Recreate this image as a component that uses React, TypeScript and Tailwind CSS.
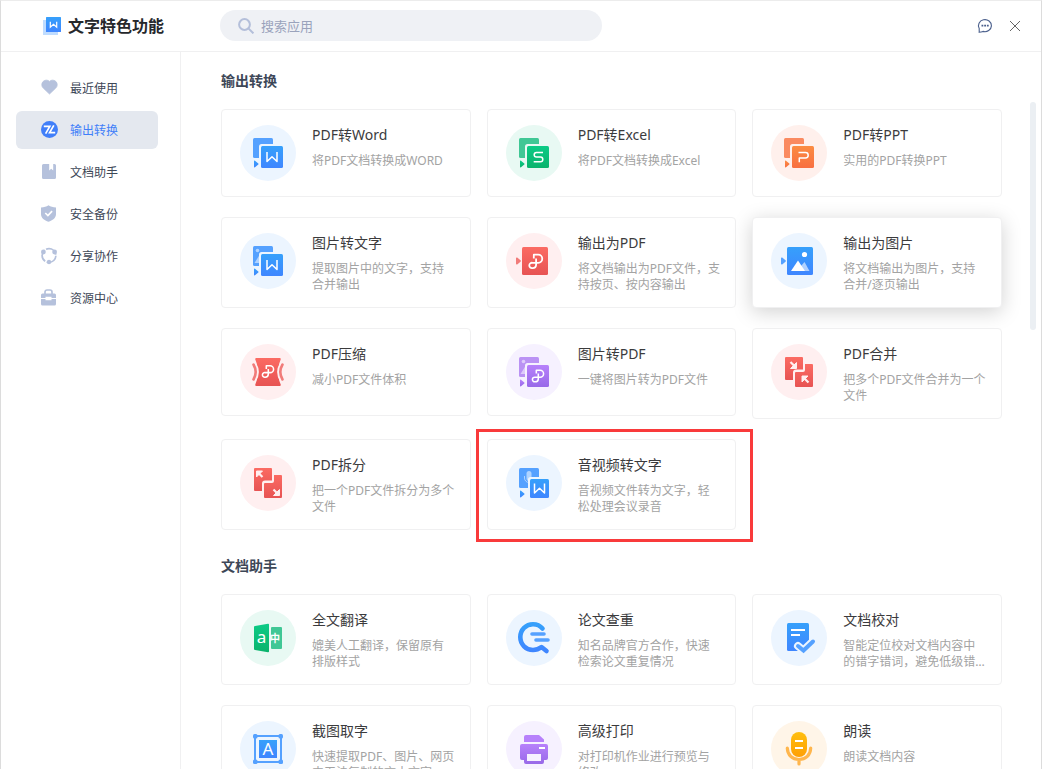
import { useState } from "react";
import type { ReactNode } from "react";
import clsx from "clsx";

type Tone = "blue" | "green" | "orange" | "red" | "purple" | "yellow";

interface Tool {
  title: string;
  desc: string;
  tone: Tone;
  icon: ReactNode;
  raised?: boolean;
  marked?: boolean;
}

const TONE_BG: Record<Tone, string> = {
  blue: "bg-[#ecf5ff]",
  green: "bg-[#e8f9f3]",
  orange: "bg-[#fff0ec]",
  red: "bg-[#ffeff0]",
  purple: "bg-[#f6f1ff]",
  yellow: "bg-[#fff5e8]",
};

const BG: Record<Tone, string> = {
  blue: "#ecf5ff",
  green: "#e8f9f3",
  orange: "#fff0ec",
  red: "#ffeff0",
  purple: "#f6f1ff",
  yellow: "#fff5e8",
};

const SOFT: Record<Tone, string> = {
  blue: "#55a1ff",
  green: "#40c795",
  orange: "#fa8a60",
  red: "#f17b79",
  purple: "#ba92f4",
  yellow: "#ffb64d",
};

const GRADIENTS: [Tone, string, string][] = [
  ["blue", "#36a0fb", "#3f86ff"],
  ["green", "#0ccb86", "#0ab36c"],
  ["orange", "#fb8c42", "#f86f41"],
  ["red", "#fb6b63", "#e75353"],
  ["purple", "#b781fb", "#9869e8"],
  ["yellow", "#ffbf0f", "#ff9f04"],
];

function Gradients() {
  return (
    <svg className="size-0" aria-hidden="true">
      <defs>
        {GRADIENTS.map(([tone, from, to]) => (
          <linearGradient key={tone} id={`g-${tone}`} x1="0" y1="0" x2="0" y2="1">
            <stop stopColor={from} />
            <stop offset="1" stopColor={to} />
          </linearGradient>
        ))}
      </defs>
    </svg>
  );
}

const MARK_W = <path d="M27 27v9.5l5-4.7 5 4.7V27" />;
const MARK_S = <path d="M37 27.5h-6.500a2.300 2.300 0 0 0 0 4.600h4a2.300 2.300 0 0 1 0 4.600h-6.800" />;
const MARK_P = <path d="M27.5 27.5h7a2.7 2.7 0 0 1 0 5.4h-6.2v4.4" />;
const MARK_PDF = <path d="M27.8 25.5v-3.8h4.4a4 4 0 0 1 0 8.1h-5.700a2.700 2.700 0 1 0 0 5.300c2.200 0 3.600-1 3.600-3.300v-6.200" />;

interface ConvertProps {
  tone: Tone;
  mark: ReactNode;
  back?: "plain" | "image" | "mic";
}

function ConvertIcon({ tone, mark, back = "plain" }: ConvertProps) {
  const at = back === "mic" ? 24 : 21;
  return (
    <g>
      <rect x="13" y="13" width="20" height="20" rx="1.5" fill={SOFT[tone]} />
      {back === "image" && (
        <g fill={BG[tone]} opacity="0.6">
          <circle cx="17.5" cy="17.5" r="1.8" />
          <path d="M14.5 30l5-8 4 8z" />
        </g>
      )}
      {back === "mic" && (
        <g opacity="0.6">
          <rect x="20.5" y="16" width="5" height="10" rx="2.5" fill={BG[tone]} />
          <path d="M18.5 21v2a4.5 4.5 0 0 0 5 4.5" fill="none" stroke={BG[tone]} />
        </g>
      )}
      <rect x={at - 2} y={at - 2} width="26" height="26" rx="2.5" fill={BG[tone]} />
      <rect x={at} y={at} width={43 - at} height={43 - at} rx="1.5" fill={`url(#g-${tone})`} />
      <path d="M14 36.2c0-.6.5-.8 1-.5l3.3 2.7c.4.3.4.8 0 1.2L15 42.2c-.5.4-1 .1-1-.5z" fill={`url(#g-${tone})`} />
      <g
        fill="none"
        stroke="#fff"
        strokeWidth="1.5"
        strokeLinejoin="round"
        transform={back === "mic" ? "translate(1.5 1.5)" : undefined}
      >
        {mark}
      </g>
    </g>
  );
}

function ExportIcon({ tone, children }: { tone: Tone; children: ReactNode }) {
  return (
    <g>
      <path d="M10 25.2c0-.7.6-1 1.2-.6l3.3 2.7c.5.4.5 1 0 1.4l-3.3 2.7c-.6.4-1.2.1-1.2-.6z" fill={SOFT[tone]} />
      <rect x="16" y="14" width="26" height="28" rx="1.5" fill={`url(#g-${tone})`} />
      {children}
    </g>
  );
}

function PagesIcon({ children }: { children: ReactNode }) {
  return (
    <g>
      <path
        d="M15 13h16a1 1 0 0 1 1 1v11.5h-7a3 3 0 0 0-3 3V36h-7a1 1 0 0 1-1-1V14a1 1 0 0 1 1-1z"
        fill="url(#g-red)"
      />
      <path
        d="M34 20h7a1 1 0 0 1 1 1v21a1 1 0 0 1-1 1H25a1 1 0 0 1-1-1V29a1 1 0 0 1 1-1h7a2 2 0 0 0 2-2z"
        fill="url(#g-red)"
      />
      <g fill={BG.red} stroke={BG.red} strokeWidth="2.2">
        {children}
      </g>
    </g>
  );
}

const CONVERT_TOOLS: Tool[] = [
  { title: "PDF转Word", desc: "将PDF文档转换成WORD", tone: "blue", icon: <ConvertIcon tone="blue" mark={MARK_W} /> },
  { title: "PDF转Excel", desc: "将PDF文档转换成Excel", tone: "green", icon: <ConvertIcon tone="green" mark={MARK_S} /> },
  { title: "PDF转PPT", desc: "实用的PDF转换PPT", tone: "orange", icon: <ConvertIcon tone="orange" mark={MARK_P} /> },
  {
    title: "图片转文字",
    desc: "提取图片中的文字，支持合并输出",
    tone: "blue",
    icon: <ConvertIcon tone="blue" mark={MARK_W} back="image" />,
  },
  {
    title: "输出为PDF",
    desc: "将文档输出为PDF文件，支持按页、按内容输出",
    tone: "red",
    icon: (
      <ExportIcon tone="red">
        <g fill="none" stroke="#fff" strokeWidth="1.8" strokeLinejoin="round">
          {MARK_PDF}
        </g>
      </ExportIcon>
    ),
  },
  {
    title: "输出为图片",
    desc: "将文档输出为图片，支持合并/逐页输出",
    tone: "blue",
    raised: true,
    icon: (
      <ExportIcon tone="blue">
        <g fill="#fff">
          <circle cx="33.5" cy="21.5" r="2.6" />
          <path d="M30 33l3.500-4 5 9H30z" opacity="0.6" />
          <path d="M20 38l7-10.500L34 38z" />
        </g>
      </ExportIcon>
    ),
  },
  {
    title: "PDF压缩",
    desc: "减小PDF文件体积",
    tone: "red",
    icon: (
      <g>
        <path
          d="M16.5 14h23c1 0 1.5.6 1.2 1.5-3.3 8-3.3 17 0 25 .3.9-.2 1.5-1.2 1.5h-23c-1 0-1.5-.6-1.2-1.5 3.3-8 3.3-17 0-25-.3-.9.2-1.5 1.2-1.5z"
          fill="url(#g-red)"
        />
        <path
          d="M13.5 20.5c3 4.8 3 10.2 0 15M42.5 20.5c-3 4.8-3 10.2 0 15"
          fill="none"
          stroke={BG.red}
          strokeWidth="6"
        />
        <path
          d="M13.5 20.5c2.8 4.8 2.8 10.2 0 15M42.5 20.5c-2.8 4.8-2.8 10.2 0 15"
          fill="none"
          stroke={SOFT.red}
          strokeWidth="2.6"
          strokeLinecap="round"
        />
        <g fill="none" stroke="#fff" strokeWidth="1.8" strokeLinejoin="round" transform="translate(2.4 3) scale(.86)">
          {MARK_PDF}
        </g>
      </g>
    ),
  },
  {
    title: "图片转PDF",
    desc: "一键将图片转为PDF文件",
    tone: "purple",
    icon: (
      <ConvertIcon
        tone="purple"
        back="image"
        mark={
          <g strokeWidth="1.8" transform="translate(6.4 7.6) scale(.86)">
            {MARK_PDF}
          </g>
        }
      />
    ),
  },
  {
    title: "PDF合并",
    desc: "把多个PDF文件合并为一个文件",
    tone: "red",
    icon: (
      <PagesIcon>
        <path d="M19.500 18l4.500 4.500" />
        <path d="M25.500 18.500v6H19.500z" strokeWidth="1" />
        <path d="M37.500 38.500L33 34" />
        <path d="M31 38v-6h6z" strokeWidth="1" />
      </PagesIcon>
    ),
  },
  {
    title: "PDF拆分",
    desc: "把一个PDF文件拆分为多个文件",
    tone: "red",
    icon: (
      <PagesIcon>
        <path d="M22.500 22L18 17.500" />
        <path d="M16.500 22v-6h6z" strokeWidth="1" />
        <path d="M33.500 34.500l4.500 4.500" />
        <path d="M39.500 34.500v6h-6z" strokeWidth="1" />
      </PagesIcon>
    ),
  },
  {
    title: "音视频转文字",
    desc: "音视频文件转为文字，轻松处理会议录音",
    tone: "blue",
    marked: true,
    icon: <ConvertIcon tone="blue" mark={MARK_W} back="mic" />,
  },
];

const DOC_TOOLS: Tool[] = [
  {
    title: "全文翻译",
    desc: "媲美人工翻译，保留原有排版样式",
    tone: "green",
    icon: (
      <g>
        <rect x="31" y="17" width="11" height="22" rx="1" fill={SOFT.green} />
        <path d="M15 16l13-2.3c.6-.1 1 .2 1 .8v27c0 .6-.4.9-1 .8L15 40c-.6-.1-1-.5-1-1V17c0-.5.4-.9 1-1z" fill="url(#g-green)" />
        <text x="21.5" y="33" textAnchor="middle" fontSize="17" fill="#fff">a</text>
        <text x="35" y="31.5" textAnchor="middle" fontSize="10" fontWeight="700" fill="#fff">中</text>
      </g>
    ),
  },
  {
    title: "论文查重",
    desc: "知名品牌官方合作，快速检索论文重复情况",
    tone: "blue",
    icon: (
      <g fill="none" strokeLinecap="round" strokeLinejoin="round">
        <path
          d="M36.5 18.5C34 15.5 30.5 14.2 27 14.2c-7 0-12.7 5.6-12.7 12.9S20 40 27 40c3.500 0 6-1 8.500-3l5 4"
          stroke="url(#g-blue)"
          strokeWidth="4.6"
        />
        <path d="M26 24h12M30 30h12" stroke={SOFT.blue} strokeWidth="3.6" />
      </g>
    ),
  },
  {
    title: "文档校对",
    desc: "智能定位校对文档内容中的错字错词，避免低级错误出现",
    tone: "blue",
    icon: (
      <g fill="none">
        <rect x="16" y="13" width="22" height="28" rx="1.5" fill="url(#g-blue)" />
        <path d="M20 20h14M20 25h9" stroke="#fff" strokeWidth="2" />
        <path d="M27 36l5.5 4.500L42 31.500" stroke={BG.blue} strokeWidth="8" strokeLinecap="round" />
        <path d="M27 36l5.5 4.500L42 31.500" stroke={SOFT.blue} strokeWidth="4" strokeLinecap="round" />
      </g>
    ),
  },
  {
    title: "截图取字",
    desc: "快速提取PDF、图片、网页中无法复制的文本文字",
    tone: "blue",
    icon: (
      <g>
        <rect x="15" y="15" width="26" height="26" fill="none" stroke={SOFT.blue} strokeWidth="2" />
        <g fill={SOFT.blue}>
          <rect x="13" y="13" width="4.5" height="4.5" rx="1.5" />
          <rect x="38.5" y="13" width="4.5" height="4.5" rx="1.5" />
          <rect x="13" y="38.5" width="4.5" height="4.5" rx="1.5" />
          <rect x="38.5" y="38.5" width="4.5" height="4.5" rx="1.5" />
        </g>
        <rect x="19" y="19" width="18" height="18" fill="url(#g-blue)" />
        <text x="28" y="34" textAnchor="middle" fontSize="17" fill="#fff">A</text>
      </g>
    ),
  },
  {
    title: "高级打印",
    desc: "对打印机作业进行预览与修改",
    tone: "purple",
    icon: (
      <g>
        <path d="M20 14h13l5 4.500V21H18v-5a2 2 0 0 1 2-2z" fill="#b781fb" />
        <path
          d="M16 23h24a2 2 0 0 1 2 2v12a2 2 0 0 1-2 2h-2v2a2 2 0 0 1-2 2H20a2 2 0 0 1-2-2v-2h-2a2 2 0 0 1-2-2V25a2 2 0 0 1 2-2z"
          fill="url(#g-purple)"
        />
        <rect x="33" y="26" width="6" height="2" fill="#fff" />
        <rect x="21" y="33" width="14" height="7" fill={BG.purple} />
      </g>
    ),
  },
  {
    title: "朗读",
    desc: "朗读文档内容",
    tone: "yellow",
    icon: (
      <g fill="none">
        <path
          d="M16.3 27c.2 7 5 11.5 11.7 11.5S39.500 34 39.700 27M28 39v4"
          stroke={SOFT.yellow}
          strokeWidth="3.2"
          strokeLinecap="round"
        />
        <rect x="20" y="11" width="16" height="25" rx="8" fill="url(#g-yellow)" />
        <path d="M24 20h8M24 27h8" stroke="#fff" strokeWidth="2" />
      </g>
    ),
  },
];

const NAV: { label: string; icon: ReactNode }[] = [
  {
    label: "最近使用",
    icon: (
      <path
        d="M8.5 15L2.200 9A4.200 4.200 0 0 1 8.500 2.400 4.200 4.200 0 0 1 14.800 9z"
        stroke="currentColor"
        strokeWidth="0.8"
      />
    ),
  },
  {
    label: "输出转换",
    icon: (
      <>
        <circle cx="8.5" cy="8.5" r="8.5" />
        <path d="M2.800 5.300h6L4.600 12.600M14.200 11.600H8.600l4.200-7.300" fill="none" stroke="#fff" strokeWidth="1.7" />
      </>
    ),
  },
  {
    label: "文档助手",
    icon: (
      <path d="M2.500 1h5.700v6.500l2-1.800 2 1.800V1h1.300A1.500 1.500 0 0 1 15 2.500v12a1.500 1.500 0 0 1-1.500 1.500h-11A1.500 1.500 0 0 1 1 14.500v-12A1.500 1.500 0 0 1 2.500 1z" />
    ),
  },
  {
    label: "安全备份",
    icon: (
      <>
        <path d="M7.500.3c2 1.400 4.500 2 7.500 2.200v6.700c0 3.600-3.500 6.300-7.500 7.500C3.500 15.500 0 12.800 0 9.200V2.500C3 2.300 5.500 1.700 7.500.3z" />
        <path d="M4.300 8l2.600 2.500 4.200-4.300" fill="none" stroke="#fff" strokeWidth="1.7" />
      </>
    ),
  },
  {
    label: "分享协作",
    icon: (
      <>
        <circle
          cx="8"
          cy="8.5"
          r="6.9"
          fill="none"
          stroke="currentColor"
          strokeWidth="1.7"
          strokeDasharray="12.85 1.6"
          strokeDashoffset="-0.35"
        />
        <circle cx="2.4" cy="5" r="2.4" />
        <circle cx="13.6" cy="5" r="2.4" />
        <circle cx="8" cy="15" r="2.2" />
      </>
    ),
  },
  {
    label: "资源中心",
    icon: (
      <>
        <path d="M4 5V3a2 2 0 0 1 2-2h3a2 2 0 0 1 2 2v2" fill="none" stroke="currentColor" strokeWidth="1.7" />
        <path d="M1.500 4.500h12A1.500 1.500 0 0 1 15 6v3h-4.500V7.800h-6V9H0V6a1.500 1.500 0 0 1 1.500-1.500z" />
        <path d="M0 10h4.500v1.300h6V10H15v5a1.500 1.500 0 0 1-1.500 1.500h-12A1.500 1.500 0 0 1 0 15z" />
      </>
    ),
  },
];

function ToolCard({ tool }: { tool: Tool }) {
  return (
    <li className="relative">
      <button
        type="button"
        className={clsx(
          "flex min-h-[88px] w-full items-start gap-4 rounded border border-[#f0f0f1] bg-white pt-[15px] pr-[15px] pb-[14px] pl-[18px] text-left",
          tool.raised && "shadow-[0_4px_20px_rgba(0,0,0,0.18)]"
        )}
      >
        <span className={clsx("size-14 shrink-0 rounded-full", TONE_BG[tool.tone])}>
          <svg viewBox="0 0 56 56" className="size-14" aria-hidden="true">
            {tool.icon}
          </svg>
        </span>
        <span className="min-w-0 flex-1">
          <span className="mb-[9px] block text-sm leading-[19px] text-[#3b3b3d]">{tool.title}</span>
          <span className="line-clamp-2 text-xs leading-4 text-[#a3a3a3]">{tool.desc}</span>
        </span>
      </button>
      {tool.marked && (
        <span className="pointer-events-none absolute -top-[10px] -right-[17px] -bottom-3 -left-[11px] border-3 border-[#f93a3b]" />
      )}
    </li>
  );
}

function ToolSection({ title, tools }: { title: string; tools: Tool[] }) {
  return (
    <section>
      <h2 className="mb-[18px] text-sm leading-5 font-bold text-[#3d4757]">{title}</h2>
      <ul className="grid grid-cols-3 items-start gap-x-4 gap-y-5">
        {tools.map((tool) => (
          <ToolCard key={tool.title} tool={tool} />
        ))}
      </ul>
    </section>
  );
}

export default function App() {
  const [active, setActive] = useState("输出转换");
  const [query, setQuery] = useState("");

  return (
    <div className="flex h-screen flex-col overflow-hidden border-x border-t border-x-[#dcdcdc] border-t-[#ececec] bg-white font-['Noto_Sans','Noto_Sans_CJK_SC',sans-serif]">
      <header className="flex h-[51px] shrink-0 items-center border-b border-[#f0f0f1] pr-5 pb-px">
        <div className="flex w-[219px] shrink-0 items-center gap-[7px] pl-[42px]">
          <svg viewBox="0 0 18 18" className="size-[18px]" aria-hidden="true">
            <rect y="3" width="15" height="15" fill="#bfdcff" />
            <rect x="3" width="15" height="15" rx="0.5" fill="url(#g-blue)" />
            <path d="M7.300 4.800v5.400l3.200-3 3.200 3V4.800" fill="none" stroke="#fff" strokeWidth="1.2" />
          </svg>
          <h1 className="text-base leading-6 font-bold text-[#26282c]">文字特色功能</h1>
        </div>
        <label className="flex h-[31px] w-[382px] items-center gap-[7px] rounded-full bg-[#eff1f5] px-[18px]">
          <svg viewBox="0 0 16 16" className="size-4 shrink-0" fill="none" stroke="#b4bfda" strokeWidth="2" aria-hidden="true">
            <circle cx="6.5" cy="6.5" r="5.4" />
            <path d="M10.400 10.400l5 5" />
          </svg>
          <input
            type="text"
            aria-label="搜索应用"
            placeholder="搜索应用"
            value={query}
            onChange={(e) => setQuery(e.target.value)}
            className="min-w-0 flex-1 bg-transparent text-[13px] leading-5 text-[#3d4757] outline-none placeholder:text-[#9aa3bc]"
          />
        </label>
        <div className="ml-auto flex items-center gap-4">
          <button type="button" aria-label="反馈">
            <svg viewBox="0 0 16 16" className="size-4" fill="none" stroke="#4a5f8c" strokeWidth="1.1" aria-hidden="true">
              <path d="M2.200 14.300v-3.800A6.500 6 0 1 1 6 13.400c-1.200.5-2.500.8-3.800.9z" />
              <path d="M4.500 7.700h1.800M7.200 7.700H9M9.900 7.700h1.800" strokeWidth="1.8" />
            </svg>
          </button>
          <button type="button" aria-label="关闭">
            <svg viewBox="0 0 12 12" className="size-3" stroke="#666" aria-hidden="true">
              <path d="M1 1l10 10M11 1L1 11" />
            </svg>
          </button>
        </div>
      </header>

      <div className="flex min-h-0 flex-1">
        <nav className="flex w-[180px] shrink-0 flex-col gap-1 border-r border-[#f0f0f1] pt-[17px] pr-[22px] pl-[15px]">
          {NAV.map((item) => (
            <button
              key={item.label}
              type="button"
              onClick={() => setActive(item.label)}
              className={clsx(
                "flex h-[38px] items-center gap-[11px] rounded-md pl-[25px] text-xs",
                active === item.label ? "bg-[#e4e8ef] text-[#417ff9]" : "text-[#3d4757]"
              )}
            >
              <svg
                viewBox="0 0 18 18"
                className={clsx("size-[18px]", active === item.label ? "text-[#417ff9]" : "text-[#b5c1dc]")}
                fill="currentColor"
                aria-hidden="true"
              >
                {item.icon}
              </svg>
              <span className="pt-px">{item.label}</span>
            </button>
          ))}
        </nav>

        <main className="flex min-w-0 flex-1 flex-col gap-[26px] overflow-y-auto pt-[19px] pr-7 pl-10 [scrollbar-width:none]">
          <ToolSection title="输出转换" tools={CONVERT_TOOLS} />
          <ToolSection title="文档助手" tools={DOC_TOOLS} />
        </main>
        <div className="mt-[50px] mr-[5px] h-[228px] w-1.5 shrink-0 rounded-full bg-[#ebeff3]" />
      </div>
      <Gradients />
    </div>
  );
}
